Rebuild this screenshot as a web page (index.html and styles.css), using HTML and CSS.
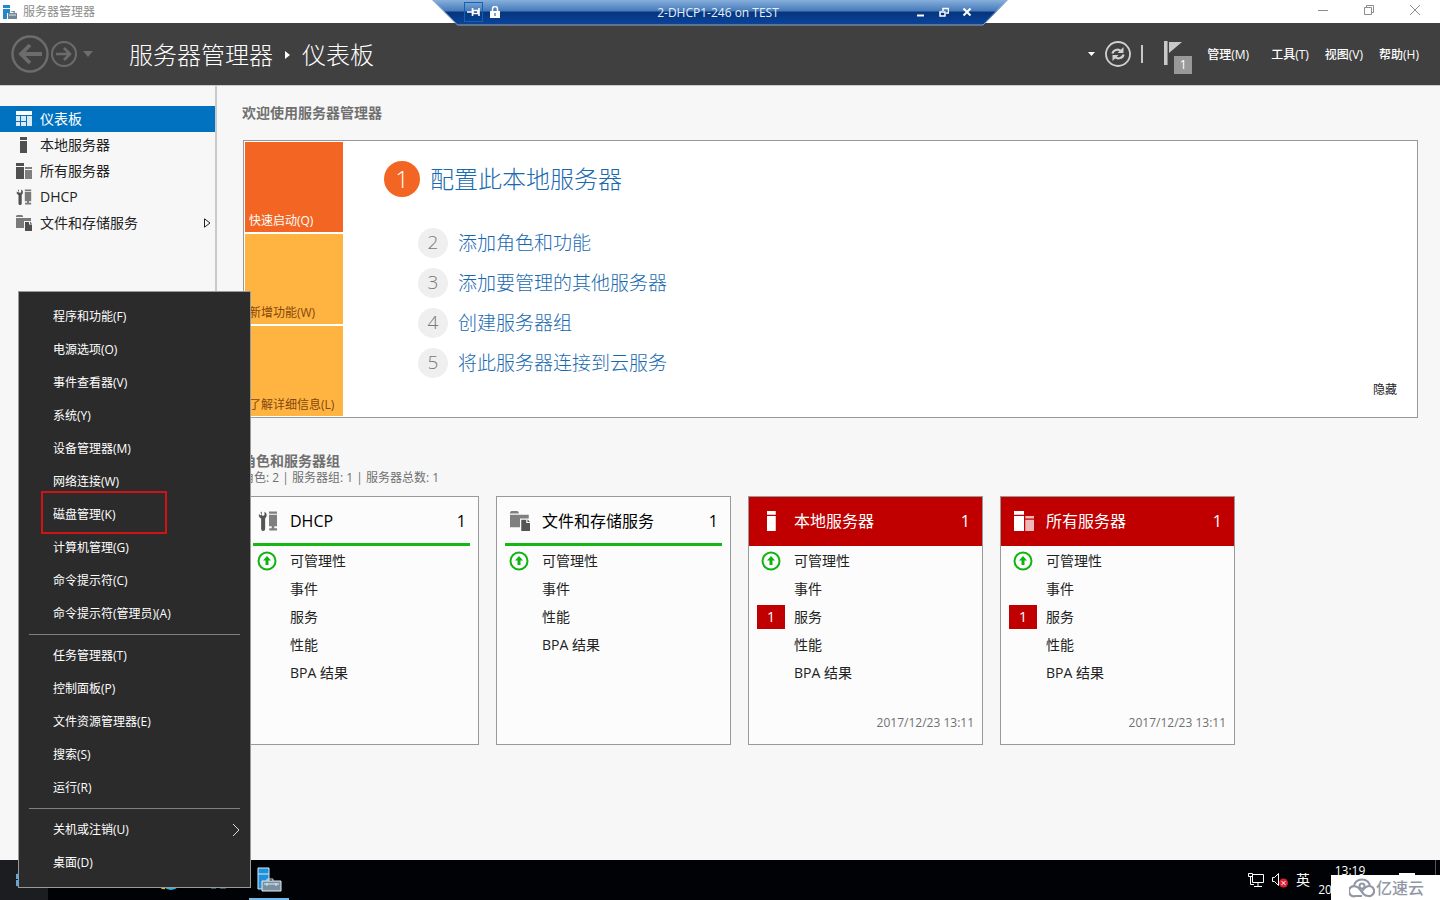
FILE: index.html
```html
<!DOCTYPE html>
<html lang="zh-CN">
<head>
<meta charset="utf-8">
<title>服务器管理器</title>
<link rel="stylesheet" href="styles.css">
</head>
<body>
<svg class="defs" width="0" height="0" aria-hidden="true">
  <defs>
    <symbol id="i-server" viewBox="0 0 16 16"><path d="M4 0h7v3H4zM4 4h7v12H4z" fill="currentColor"/></symbol>
    <symbol id="i-servers" viewBox="0 0 16 16"><path d="M0 0h8v3H0zM0 4h8v12H0z" fill="currentColor"/><path d="M9 4h7v2H9zM9 7h7v9H9z" fill="currentColor" opacity=".72"/></symbol>
    <symbol id="i-dhcp" viewBox="0 0 16 16"><path d="M3 .4v2.800l1 .8 1.200-.8V.6C7 1.400 7.500 3.600 6.300 5.200l-.6.6V14.400a1.600 1.600 0 0 1-3.200 0V5.900C.6 5 .4 3.600.8 2.400L2 3.600l.8-.6-.8-1.800z" fill="currentColor"/><path d="M8.800.4h6.400v1.800H8.800zM8.800 3h6.400v9.200H8.800zM11 12.200h2v1.600h2.200v1.800H9v-1.800h2z" fill="currentColor" opacity=".75"/></symbol>
    <symbol id="i-files" viewBox="0 0 16 16"><path d="M0 1l1-1h5l1 1v1H0zM0 3h15v3H8v7H0z" fill="currentColor" opacity=".75"/><path d="M9 7h4v2.500h3V16H9zM14 6.500L16 8.700h-2z" fill="currentColor"/></symbol>
    <symbol id="i-up" viewBox="0 0 20 20"><circle cx="10" cy="10" r="8.500" fill="none" stroke="#10b410" stroke-width="2"/><path d="M10 5l4 4.600h-2.500V14h-3V9.600H6z" fill="#10b410"/></symbol>
    <symbol id="i-app" viewBox="0 0 26 26"><path d="M2 2h11v21H2z" fill="#1e90dc" stroke="#d8ecfa"/><path d="M2 8h11" stroke="#d8ecfa"/><path d="M11 15V13h6v2" fill="none" stroke="#d0dce4"/><path d="M6 15h19v10H6z" fill="#7890a2" stroke="#e4edf3"/><path d="M8 18h15M11 17v3M20 17v3" stroke="#e4edf3"/></symbol>
  </defs>
</svg>

<div class="screen">
  <header class="titlebar">
    <svg class="title-icon" viewBox="0 0 14 14"><path d="M0 0h7v3H0zM0 4h7v4H4v6H0z" fill="#2389c9"/><path d="M5 8h9v6H5zM7 6h5v2" fill="#71869a"/><path d="M6 10h7" stroke="#dce6ee"/></svg>
    <span class="title-text">服务器管理器</span>
    <div class="window-buttons">
      <button aria-label="最小化"><svg viewBox="0 0 12 12"><path d="M1 6.500h10"/></svg></button>
      <button aria-label="还原"><svg viewBox="0 0 12 12"><path d="M1.500 3.500h7v7h-7zM3.500 3V1.500h7v7H9"/></svg></button>
      <button aria-label="关闭"><svg viewBox="0 0 12 12"><path d="M1 1l10 10M11 1L1 11"/></svg></button>
    </div>
  </header>

  <div class="rdp-bar">
    <svg class="rdp-shape" viewBox="0 0 576 26" preserveAspectRatio="none" aria-hidden="true">
      <defs><linearGradient id="rdp" x1="0" y1="0" x2="0" y2="1"><stop offset="0" stop-color="#86afdc"/><stop offset=".46" stop-color="#4579b8"/><stop offset=".48" stop-color="#06357c"/><stop offset="1" stop-color="#0a449c"/></linearGradient></defs>
      <path d="M0 0h576l-24 24.500H25z" fill="url(#rdp)"/><path d="M1 0l24.500 25H551L575 0" fill="none" stroke="#8da6c4"/>
    </svg>
    <div class="rdp-content">
      <div class="rdp-side">
        <button class="pin" aria-label="固定"><svg viewBox="0 0 14 12"><path d="M0 6h5M5.500 2v8M6 4.500h5v3H6zM12 2v8" fill="none" stroke="#fff" stroke-width="1.600"/></svg></button>
        <svg class="lock" viewBox="0 0 10 12"><path d="M2.500 5V3a2.500 2.500 0 0 1 5 0v2" fill="none" stroke="#fff" stroke-width="1.500"/><path d="M0 5h10v7H0z" fill="#fff"/><path d="M4.500 7h1v3h-1z" fill="#174780"/></svg>
      </div>
      <span class="rdp-title">2-DHCP1-246 on TEST</span>
      <div class="rdp-side rdp-buttons">
        <button aria-label="最小化连接"><svg viewBox="0 0 10 10"><path d="M1 8.500h7" stroke-width="2"/></svg></button>
        <button aria-label="还原连接"><svg viewBox="0 0 10 10"><path d="M1 5h5v4H1zM4 4V1.500h5.500V6H7"/></svg></button>
        <button aria-label="断开连接"><svg viewBox="0 0 10 10"><path d="M1.500 1.500l7 7M8.500 1.500l-7 7" stroke-width="2"/></svg></button>
      </div>
    </div>
  </div>

  <nav class="navbar">
    <div class="nav-history">
      <button aria-label="后退"><svg class="nav-back" viewBox="0 0 38 38"><circle cx="19" cy="19" r="17.500" stroke-width="2.400"/><path d="M31 19H9M19 10l-9 9 9 9" stroke-width="3.800"/></svg></button>
      <button aria-label="前进"><svg class="nav-forward" viewBox="0 0 26 26"><circle cx="13" cy="13" r="12" stroke-width="2"/><path d="M5 13h14M13 7l6 6-6 6" stroke-width="2.600"/></svg></button>
      <button aria-label="历史记录"><svg class="nav-caret" viewBox="0 0 10 6"><path d="M0 0h10L5 6z"/></svg></button>
    </div>
    <h1 class="crumbs"><span>服务器管理器</span><svg viewBox="0 0 5 8"><path d="M0 0l5 4-5 4z" fill="#fff"/></svg><span>仪表板</span></h1>
    <div class="nav-tools">
      <button aria-label="更多"><svg class="tool-caret" viewBox="0 0 7 4"><path d="M0 0h7L3.500 4z" fill="#fff"/></svg></button>
      <button aria-label="刷新"><svg class="refresh" viewBox="0 0 26 26" fill="none" stroke="#d0d0d0"><circle cx="13" cy="13" r="12" stroke-width="1.800"/><path d="M7.500 12.500c.5-3.500 5.500-5 8.500-2.500M18.500 13.500c-.5 3.500-5.500 5-8.500 2.500" stroke-width="2.200"/><path d="M18.500 6v6h-6zM7.500 20v-6h6z" fill="#d0d0d0" stroke="none"/></svg></button>
      <span class="divider"></span>
      <button class="flag" aria-label="通知 1"><svg viewBox="0 0 18 26"><path d="M0 0h4v24H0zM5 1h13L5 12z" fill="#c8c8c8"/><path d="M3.500 0v24" stroke="#8c8c8c"/></svg><span class="flag-count">1</span></button>
    </div>
    <div class="nav-menu">
      <button>管理(M)</button><button>工具(T)</button><button>视图(V)</button><button>帮助(H)</button>
    </div>
  </nav>

  <div class="workspace">
    <aside class="sidebar">
      <a class="side-item selected" href="#"><svg viewBox="0 0 16 16" fill="#fff"><path d="M0 0h16v4H0z"/><path d="M0 5h4v5H0zM0 11h4v4H0zM5 5h5v5H5zM5 11h5v4H5zM11 5h5v10h-5z" opacity=".85"/></svg><span>仪表板</span></a>
      <a class="side-item" href="#"><svg><use href="#i-server"/></svg><span>本地服务器</span></a>
      <a class="side-item" href="#"><svg><use href="#i-servers"/></svg><span>所有服务器</span></a>
      <a class="side-item" href="#"><svg><use href="#i-dhcp"/></svg><span>DHCP</span></a>
      <a class="side-item" href="#"><svg><use href="#i-files"/></svg><span>文件和存储服务</span><svg class="expand" viewBox="0 0 8 10"><path d="M1.500 .8v8.400l5.500-4.200z" fill="none" stroke="#222"/></svg></a>
    </aside>

    <main class="content">
      <h2 class="section-title">欢迎使用服务器管理器</h2>
      <section class="welcome">
        <div class="tabs">
          <button class="tab active">快速启动(Q)</button>
          <button class="tab">新增功能(W)</button>
          <button class="tab">了解详细信息(L)</button>
        </div>
        <div class="steps">
          <a class="step primary" href="#"><span class="num">1</span><span>配置此本地服务器</span></a>
          <a class="step" href="#"><span class="num">2</span><span>添加角色和功能</span></a>
          <a class="step" href="#"><span class="num">3</span><span>添加要管理的其他服务器</span></a>
          <a class="step" href="#"><span class="num">4</span><span>创建服务器组</span></a>
          <a class="step" href="#"><span class="num">5</span><span>将此服务器连接到云服务</span></a>
        </div>
        <button class="hide">隐藏</button>
      </section>

      <div class="groups-head">
        <h2 class="section-title">角色和服务器组</h2>
        <p class="summary">角色: 2 | 服务器组: 1 | 服务器总数: 1</p>
      </div>
      <section class="cards">
        <article class="card">
          <header><svg><use href="#i-dhcp"/></svg><h3>DHCP</h3><span>1</span></header>
          <ul>
            <li><svg><use href="#i-up"/></svg><a href="#">可管理性</a></li><li><a href="#">事件</a></li><li><a href="#">服务</a></li><li><a href="#">性能</a></li><li><a href="#">BPA 结果</a></li>
          </ul>
        </article>
        <article class="card">
          <header><svg><use href="#i-files"/></svg><h3>文件和存储服务</h3><span>1</span></header>
          <ul>
            <li><svg><use href="#i-up"/></svg><a href="#">可管理性</a></li><li><a href="#">事件</a></li><li><a href="#">性能</a></li><li><a href="#">BPA 结果</a></li>
          </ul>
        </article>
        <article class="card alert">
          <header><svg><use href="#i-server"/></svg><h3>本地服务器</h3><span>1</span></header>
          <ul>
            <li><svg><use href="#i-up"/></svg><a href="#">可管理性</a></li><li><a href="#">事件</a></li><li><span class="badge">1</span><a href="#">服务</a></li><li><a href="#">性能</a></li><li><a href="#">BPA 结果</a></li>
          </ul>
          <time>2017/12/23 13:11</time>
        </article>
        <article class="card alert">
          <header><svg><use href="#i-servers"/></svg><h3>所有服务器</h3><span>1</span></header>
          <ul>
            <li><svg><use href="#i-up"/></svg><a href="#">可管理性</a></li><li><a href="#">事件</a></li><li><span class="badge">1</span><a href="#">服务</a></li><li><a href="#">性能</a></li><li><a href="#">BPA 结果</a></li>
          </ul>
          <time>2017/12/23 13:11</time>
        </article>
      </section>
    </main>
  </div>

  <footer class="taskbar">
    <button class="start" aria-label="开始"><svg viewBox="0 0 16 16" fill="#5aa9e6"><path d="M0 2l7-1v6H0zM8 1l8-1v7H8zM0 8h7v7l-7-1zM8 8h8v8l-8-1z"/></svg></button>
    <button class="task-ie" aria-label="浏览器"><svg viewBox="0 0 22 22"><circle cx="12" cy="11" r="8" fill="none" stroke="#2bb5e8" stroke-width="4"/><path d="M3 13c-2 4-1 7 3 6" fill="none" stroke="#e8b62c" stroke-width="2"/></svg></button>
    <button class="task-tool" aria-label="工具"><svg viewBox="0 0 22 22"><path d="M3 18h5M12 18h6" stroke="#5e97b8" stroke-width="3"/></svg></button>
    <button class="task-app" aria-label="服务器管理器"><svg><use href="#i-app"/></svg></button>
    <div class="tray">
      <svg class="net" viewBox="0 0 18 16" fill="none" stroke="#fff"><path d="M5.500 2.500h11v8h-11zM11 11v3M7 14.500h8M1.500 1.500h4v3h-4zM3.500 5v7.500H7"/></svg>
      <svg class="sound" viewBox="0 0 18 16"><path d="M1.500 5.500h2l4-4v12l-4-4h-2z" fill="none" stroke="#fff"/><circle cx="12.500" cy="11" r="4.500" fill="#e02036"/><path d="M10.500 9l4 4M14.500 9l-4 4" stroke="#fff"/></svg>
      <span class="ime">英</span>
      <div class="clock"><span>13:19</span><span>2017/12/23</span></div>
      <svg class="note" viewBox="0 0 16 14"><path d="M0 0h16v11H9l-3 3v-3H0z" fill="#fff"/></svg>
      <span class="show-desktop"></span>
    </div>
    <div class="watermark">
      <svg viewBox="0 0 26 20" fill="none" stroke="#9297a6" stroke-width="2.200"><path d="M5 8.500C5 4.500 8.500 1.500 13 1.500s8 3 8 7"/><path d="M13 18H6.500a5 5 0 1 1 0-9.500c2.500 0 3.500 1.500 5 3.500l3 4c1.200 1.500 2.800 2 5 2a5 5 0 1 0-1.500-9.500c-2 .5-3 2-4.500 4"/><circle cx="13" cy="8" r="2.500" stroke-width="2"/></svg>
      <span>亿速云</span>
    </div>
  </footer>

  <div class="context-menu" role="menu">
    <button role="menuitem">程序和功能(F)</button>
    <button role="menuitem">电源选项(O)</button>
    <button role="menuitem">事件查看器(V)</button>
    <button role="menuitem">系统(Y)</button>
    <button role="menuitem">设备管理器(M)</button>
    <button role="menuitem">网络连接(W)</button>
    <button role="menuitem" class="marked">磁盘管理(K)</button>
    <button role="menuitem">计算机管理(G)</button>
    <button role="menuitem">命令提示符(C)</button>
    <button role="menuitem">命令提示符(管理员)(A)</button>
    <hr>
    <button role="menuitem">任务管理器(T)</button>
    <button role="menuitem">控制面板(P)</button>
    <button role="menuitem">文件资源管理器(E)</button>
    <button role="menuitem">搜索(S)</button>
    <button role="menuitem">运行(R)</button>
    <hr>
    <button role="menuitem">关机或注销(U)<svg viewBox="0 0 8 14"><path d="M1 1l6 6-6 6" fill="none" stroke="#ddd"/></svg></button>
    <button role="menuitem">桌面(D)</button>
  </div>
</div>
</body>
</html>
```
FILE: styles.css
```css
*, *::before, *::after { box-sizing: border-box; }
body { margin: 0; font: 12px/16px "Open Sans", "Noto Sans CJK SC", sans-serif; color: #222; background: #f7f7f7; }
button { margin: 0; padding: 0; border: 0; background: none; color: inherit; font: inherit; display: flex; align-items: center; }
a { color: inherit; text-decoration: none; }
h1, h2, h3, p, ul { margin: 0; padding: 0; font-weight: 400; }
ul { list-style: none; }
svg { display: block; flex: none; }
.defs { position: absolute; }
.screen { position: relative; min-height: 100vh; display: flex; flex-direction: column; }

.titlebar { height: 23px; display: flex; align-items: center; gap: 6px; padding-left: 3px; background: #fff; color: #8c8c8c; }
.title-icon { width: 14px; height: 14px; }
.window-buttons { margin-left: auto; display: flex; align-self: flex-start; padding-right: 2px; }
.window-buttons button { width: 46px; height: 20px; justify-content: center; }
.window-buttons svg { width: 12px; height: 12px; fill: none; stroke: #8c8c8c; }

.rdp-bar { position: absolute; top: 0; left: 0; right: 0; width: 576px; height: 26px; margin: 0 auto; color: #e6f0fa; }
.rdp-shape { position: absolute; width: 100%; height: 100%; }
.rdp-content { position: relative; height: 25px; display: flex; align-items: center; padding: 0 36px 0 32px; }
.rdp-side { display: flex; align-items: center; width: 60px; padding-bottom: 1px; }
.pin { width: 19px; height: 20px; justify-content: center; border: 1px solid #1463b0; }
.pin svg { width: 14px; height: 12px; }
.lock { width: 10px; height: 12px; margin-left: 7px; }
.rdp-title { flex: 1; text-align: center; }
.rdp-buttons { justify-content: flex-end; gap: 13px; }
.rdp-buttons svg { width: 10px; height: 10px; fill: none; stroke: #fff; stroke-width: 1.5; }

.navbar { height: 62px; display: flex; align-items: center; background: #404040; color: #fff; padding: 0 21px 0 11px; }
.nav-history { display: flex; align-items: center; gap: 2px; width: 118px; }
.nav-history svg { fill: none; stroke: #6c6c6c; }
.nav-back { width: 38px; height: 38px; }
.nav-forward { width: 26px; height: 26px; }
.nav-history .nav-caret { width: 10px; height: 6px; margin-left: 4px; fill: #6c6c6c; stroke: none; }
.crumbs { display: flex; align-items: center; gap: 12px; font-size: 24px; line-height: 32px; font-weight: 300; padding-top: 1px; }
.crumbs svg { width: 5px; height: 8px; }
.nav-tools { margin-left: auto; display: flex; align-items: center; }
.tool-caret { width: 7px; height: 4px; }
.refresh { width: 26px; height: 26px; margin-left: 10px; }
.divider { width: 2px; height: 18px; margin-left: 10px; background: #c8c8c8; }
.flag { position: relative; width: 28px; height: 26px; margin-left: 21px; }
.flag svg { width: 18px; height: 26px; }
.flag-count { position: absolute; right: 0; bottom: -7px; width: 18px; height: 18px; background: #999; line-height: 18px; text-align: center; }
.nav-menu { display: flex; gap: 16px; margin-left: 15px; padding-top: 2px; font-weight: 500; }
.nav-menu button:first-child { margin-right: 6px; }

.workspace { flex: 1; display: flex; border-top: 1px solid #ccc; }
.sidebar { width: 217px; flex: none; border-right: 2px solid #cacaca; padding-top: 20px; font-size: 14px; line-height: 20px; }
.side-item { height: 26px; display: flex; align-items: center; gap: 8px; padding: 0 4px 0 16px; }
.side-item svg { width: 16px; height: 16px; color: #505050; }
.side-item.selected { background: #0072c0; color: #fff; }
.side-item .expand { width: 8px; height: 10px; margin-left: auto; }

.content { flex: 1; min-width: 0; padding: 17px 22px 0 25px; }
.section-title { font-size: 14px; line-height: 20px; font-weight: 700; color: #707070; }
.welcome { display: flex; margin: 17px 0 0 1px; padding: 1px; border: 1px solid #999; background: #fff; }
.tabs { display: flex; flex-direction: column; gap: 2px; width: 98px; }
.tab { height: 90px; align-items: flex-end; padding: 0 4px 3px; background: #ffb441; color: #85460b; }
.tab.active { background: #f26522; color: #fff; }
.steps { flex: 1; padding: 19px 0 0 41px; }
.step { display: flex; align-items: center; gap: 10px; height: 40px; padding-left: 34px; font-size: 19px; line-height: 26px; font-weight: 300; color: #1869b0; }
.step.primary { height: 36px; padding-left: 0; margin-bottom: 26px; font-size: 24px; }
.num { width: 30px; height: 30px; border-radius: 50%; background: #efefef; color: #777; line-height: 29px; text-align: center; }
.primary .num { width: 36px; height: 36px; background: #f26522; color: #fff; line-height: 35px; }
.hide { align-self: flex-end; padding: 0 19px 18px 0; }

.groups-head { margin-top: 33px; }
.summary { line-height: 16px; margin-top: -1px; color: #707070; }
.cards { display: flex; flex-wrap: wrap; gap: 17px; padding: 10px 0 0 2px; }
.card { width: 235px; height: 249px; display: flex; flex-direction: column; border: 1px solid #999; background: #fcfcfc; font-size: 14px; }
.card header { position: relative; height: 49px; flex: none; display: flex; align-items: center; padding: 0 12px 2px 13px; color: #000; font-size: 16px; line-height: 24px; }
.card header::after { content: ""; position: absolute; left: 8px; right: 8px; bottom: 0; height: 3px; background: #16b616; }
.card header svg { width: 20px; height: 20px; color: #555; }
.card header h3 { flex: 1; margin-left: 12px; font-size: 16px; }
.card.alert header { background: #c00000; color: #fff; }
.card.alert header::after { content: none; }
.card.alert header svg { color: #fff; }
.card ul { padding-top: 1px; }
.card li { position: relative; height: 28px; display: flex; align-items: center; padding-left: 45px; line-height: 20px; }
.card li svg { position: absolute; left: 12px; width: 20px; height: 20px; }
.badge { position: absolute; left: 8px; width: 28px; height: 24px; background: #c00000; color: #fff; line-height: 23px; text-align: center; }
.card time { margin: auto 8px 13px auto; color: #707070; font-size: 12px; line-height: 16px; }

.taskbar { position: relative; height: 40px; display: flex; background: #000205; color: #fff; }
.start { width: 48px; justify-content: center; background: #1c1d20; }
.start svg { width: 16px; height: 16px; }
.task-ie { margin-left: 111px; width: 22px; }
.task-ie svg, .task-tool svg { width: 22px; height: 22px; }
.task-tool { margin-left: 27px; width: 22px; }
.task-app { width: 40px; margin-left: 19px; justify-content: center; border-bottom: 2px solid #76b9ed; }
.task-app svg { width: 26px; height: 26px; }
.tray { margin-left: auto; display: flex; align-items: center; }
.net { width: 18px; height: 16px; }
.sound { width: 18px; height: 16px; margin-left: 6px; }
.ime { margin-left: 7px; font-size: 14px; }
.clock { margin-left: 6px; width: 68px; display: flex; flex-direction: column; align-items: center; gap: 3px; }
.note { width: 16px; height: 14px; margin: 0 20px 0 15px; }
.show-desktop { width: 5px; height: 40px; border-left: 1px solid #555; }
.watermark { position: absolute; right: 0; bottom: 0; width: 109px; height: 25px; display: flex; align-items: center; gap: 1px; padding-left: 18px; background: #fff; color: #9297a6; font-size: 16px; line-height: 24px; font-weight: 500; }
.watermark svg { width: 26px; height: 20px; }

.context-menu { position: absolute; left: 18px; bottom: 12px; width: 233px; padding: 8px 10px; border: 1px solid #9a9a9a; background: #2b2b2b; color: #fff; }
.context-menu button { position: relative; width: 100%; height: 33px; padding-left: 24px; }
.context-menu button svg { width: 8px; height: 14px; margin-left: auto; }
.context-menu hr { height: 1px; margin: 4px 0; border: 0; background: #808080; }
.marked::after { content: ""; position: absolute; left: 12px; top: -7px; width: 126px; height: 43px; border: 2px solid #d01414; }
```
